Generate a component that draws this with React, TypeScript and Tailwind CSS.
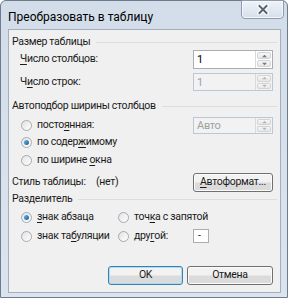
import React from "react";

const U = ({ children }: { children: React.ReactNode }) => (
  <span className="underline underline-offset-[2px]">{children}</span>
);

const Radio = ({ checked }: { checked?: boolean }) => (
  <span className="flex items-center justify-center w-[11px] h-[11px] rounded-full border border-[#a4aab2] bg-gradient-to-br from-[#e2e2e2] to-[#ffffff] shrink-0">
    {checked && (
      <span className="w-[5px] h-[5px] rounded-full bg-gradient-to-br from-[#64b5ea] to-[#1d5f95]" />
    )}
  </span>
);

const RadioItem = ({
  checked,
  children,
  className = "",
}: {
  checked?: boolean;
  children: React.ReactNode;
  className?: string;
}) => (
  <div className={`flex items-center gap-[5px] whitespace-nowrap ${className}`}>
    <Radio checked={checked} />
    <span>{children}</span>
  </div>
);

const Spinner = ({ disabled }: { disabled?: boolean }) => (
  <div className="flex flex-col w-[17px] h-full border-l border-[#dadada] p-[1px] gap-[1px]">
    {["M1 4 L4 1 L7 4", "M1 1 L4 4 L7 1"].map((d) => (
      <div
        key={d}
        className="flex-1 flex items-center justify-center border border-[#d4d4d4] bg-gradient-to-b from-[#f7f7f7] to-[#e6e6e6] rounded-[2px]"
      >
        <svg width="7" height="4" viewBox="0 0 8 5">
          <path d={d} fill={disabled ? "#b8b8b8" : "#6a7a8a"} />
        </svg>
      </div>
    ))}
  </div>
);

const SpinBox = ({
  value,
  disabled,
  h,
}: {
  value: string;
  disabled?: boolean;
  h: string;
}) => (
  <div
    className={`flex w-[80px] ${h} border ${
      disabled ? "border-[#b8c9dc] bg-[#f2f2f2] text-[#a0a0a0]" : "border-[#abadb3] bg-white text-black"
    }`}
  >
    <span className="flex-1 flex items-center pl-[3px] text-[11px]">{value}</span>
    <Spinner disabled={disabled} />
  </div>
);

const GroupHeader = ({ title, className = "" }: { title: string; className?: string }) => (
  <div className={`flex items-center h-[14px] gap-[6px] whitespace-nowrap ${className}`}>
    <span>{title}</span>
    <div className="flex-1 h-px bg-[#d5dfe5] mr-[2px]" />
  </div>
);

const Btn = ({
  children,
  primary,
  className = "",
}: {
  children: React.ReactNode;
  primary?: boolean;
  className?: string;
}) => (
  <div
    className={`flex items-center justify-center h-[19px] rounded-[3px] border whitespace-nowrap ${
      primary
        ? "border-[#3c7fb1] shadow-[inset_0_0_0_1px_#a9dcf5]"
        : "border-[#707070] shadow-[inset_0_0_0_1px_#fbfbfb]"
    } bg-gradient-to-b from-[#f2f2f2] from-45% to-[#dbdbdb] to-55% ${className}`}
  >
    {children}
  </div>
);

export default function App() {
  return (
    <div
      className="w-[289px] h-[299px] bg-white text-[10.5px] leading-none tracking-[-0.3px] text-[#1a1a1a]"
      style={{ fontFamily: 'Roboto, "Noto Sans", sans-serif' }}
    >
      <div className="w-[288px] h-[298px] border border-[#6d7b8b] rounded-t-[6px] bg-gradient-to-b from-[#d3dde9] to-[#dbe4ee] flex flex-col">
        {/* title bar */}
        <div className="relative h-[28px] flex items-center pl-[7px] pt-[3px]">
          <span className="text-[12px] tracking-normal text-black whitespace-nowrap">Преобразовать в таблицу</span>
          <div className="absolute right-[3px] top-[-1px] w-[43px] h-[19px] rounded-b-[4px] border border-[#8f9caf] bg-gradient-to-b from-[#eef3f8] to-[#d6dfea] shadow-[inset_0_0_0_1px_#f4f7fb] flex items-center justify-center">
            <svg width="12" height="11" viewBox="0 0 12 11">
              <path d="M2.5 2 L9.5 9 M9.5 2 L2.5 9" stroke="#ffffff" strokeWidth="4.4" strokeLinecap="square" />
              <path d="M2.5 2 L9.5 9 M9.5 2 L2.5 9" stroke="#5a6470" strokeWidth="2" strokeLinecap="square" />
            </svg>
          </div>
        </div>

        {/* client area */}
        <div className="ml-[7px] w-[273px] h-[264px] border border-[#a3afbd] bg-[#f0f0f0] pl-[3px] pr-[1px] flex flex-col">
          <GroupHeader title="Размер таблицы" className="mt-[5px]" />
          <div className="flex items-center h-[19px] mt-[1px] pl-[8px] pr-[6px]">
            <span className="flex-1 whitespace-nowrap">
              <U>Ч</U>исло столбцов:
            </span>
            <SpinBox value="1" h="h-[19px]" />
          </div>
          <div className="flex items-center h-[18px] mt-[4px] pl-[8px] pr-[6px]">
            <span className="flex-1 whitespace-nowrap">
              Ч<U>и</U>сло строк:
            </span>
            <SpinBox value="1" disabled h="h-[18px]" />
          </div>

          <GroupHeader title="Автоподбор ширины столбцов" className="mt-[8px]" />
          <div className="flex items-center h-[16px] mt-[4px] pl-[9px] pr-[6px]">
            <RadioItem className="flex-1">
              посто<U>я</U>нная:
            </RadioItem>
            <SpinBox value="Авто" disabled h="h-[17px]" />
          </div>
          <RadioItem checked className="h-[16px] mt-[1px] pl-[9px]">
            по содер<U>ж</U>имому
          </RadioItem>
          <RadioItem className="h-[16px] mt-[2px] pl-[9px]">
            по ширине <U>о</U>кна
          </RadioItem>

          <div className="flex items-center h-[19px] mt-[5px] pr-[6px] whitespace-nowrap">
            <span className="w-[84px]">Стиль таблицы:</span>
            <span className="flex-1">(нет)</span>
            <Btn className="w-[80px]">
              <span>
                <U>А</U>втоформат...
              </span>
            </Btn>
          </div>

          <GroupHeader title="Разделитель" className="mt-[0px]" />
          <div className="flex items-center h-[16px] mt-[3px] pl-[9px]">
            <RadioItem checked className="w-[97px]">
              <U>з</U>нак абзаца
            </RadioItem>
            <RadioItem>
              точ<U>к</U>а с запятой
            </RadioItem>
          </div>
          <div className="flex items-center h-[14px] mt-[4px] pl-[9px]">
            <RadioItem className="w-[97px]">
              знак та<U>б</U>уляции
            </RadioItem>
            <RadioItem className="w-[75px]">
              дру<U>г</U>ой:
            </RadioItem>
            <div className="w-[16px] h-[14px] border border-[#abadb3] bg-white flex items-center pl-[4px]">
              -
            </div>
          </div>

          <div className="flex justify-end gap-[4px] h-[19px] mt-[23px] pr-[6px]">
            <Btn primary className="w-[75px]">
              OK
            </Btn>
            <Btn className="w-[86px]">Отмена</Btn>
          </div>
        </div>
      </div>
    </div>
  );
}
